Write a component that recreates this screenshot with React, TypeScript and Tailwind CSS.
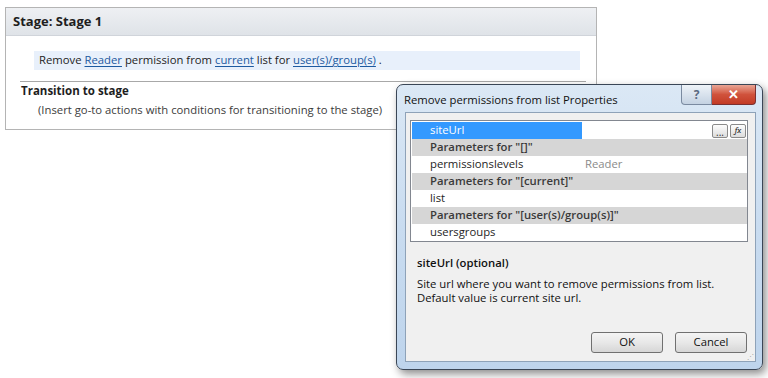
import React from "react";

const ui = "font-['Open_Sans','Noto_Sans',sans-serif]";

function Link({ children }: { children: React.ReactNode }) {
  return <span className="text-[#1d5aa0] underline underline-offset-2">{children}</span>;
}

function StagePanel() {
  return (
    <div className="ml-[5px] mt-[7px] w-[592px] h-[123px] border border-[#b4b4b4] bg-white">
      <div className="h-[28px] flex items-center pl-[7px] bg-gradient-to-b from-[#eef0f3] to-[#dfe3e8] border-b border-[#d0d4da]">
        <span className="text-[13px] font-bold text-[#1e1e1e]">Stage: Stage 1</span>
      </div>
      <div className="mt-[15px] ml-[28px] w-[546px] h-[19px] bg-[#e8f0fb] flex items-center pl-[5px] text-[11.3px] text-[#1e1e1e] whitespace-nowrap">
        Remove&nbsp;<Link>Reader</Link>&nbsp;permission from&nbsp;<Link>current</Link>&nbsp;list for&nbsp;
        <Link>user(s)/group(s)</Link>&nbsp;.
      </div>
      <div className="mt-[11px] ml-[14px] w-[566px] h-px bg-[#a8a8a8]" />
      <div className="ml-[15px] mt-[1px] text-[11.5px] font-bold text-[#1e1e1e] leading-[16px]">Transition to stage</div>
      <div className="ml-[32px] mt-[3px] text-[11.3px] text-[#3c3c3c] leading-[16px]">
        (Insert go-to actions with conditions for transitioning to the stage)
      </div>
    </div>
  );
}

function Row({ name, value, category, selected }: { name: string; value?: string; category?: boolean; selected?: boolean }) {
  if (category) {
    return (
      <div className="h-[17px] bg-[#d6d6d6] flex items-center pl-[18px] text-[11.3px] font-semibold text-[#3a3a3a]">
        {name}
      </div>
    );
  }
  return (
    <div className="h-[17px] flex items-center bg-white text-[11.3px]">
      <div className={`w-[170px] h-full flex items-center pl-[18px] ${selected ? "bg-[#3399ff] text-white" : "text-[#1e1e1e]"}`}>
        {name}
      </div>
      <div className="flex-1 h-full flex items-center pl-[3px] text-[#8a8a8a]">
        {value}
        {selected && (
          <div className="ml-auto mr-[1px] flex gap-[2px]">
            <div className="w-[16px] h-[14px] border border-[#8a8a8a] rounded-[2px] bg-gradient-to-b from-[#fdfdfd] to-[#dcdcdc] flex items-end justify-center text-[10px] leading-[10px] text-[#333]">
              ...
            </div>
            <div className="w-[16px] h-[14px] border border-[#8a8a8a] rounded-[2px] bg-gradient-to-b from-[#fdfdfd] to-[#dcdcdc] flex items-center justify-center text-[9px] italic font-serif text-[#222]">
              fx
            </div>
          </div>
        )}
      </div>
    </div>
  );
}

function Dialog() {
  return (
    <div className={`absolute left-[396px] top-[84px] w-[367px] h-[286px] rounded-[7px] border border-[#3a4656] bg-gradient-to-b from-[#dbe8f5] via-[#c9dcf0] to-[#bed4ec] shadow-[3px_4px_8px_rgba(0,0,0,0.45)] flex flex-col ${ui}`}>
      <div className="h-[27px] flex items-start">
        <span className="ml-[7px] mt-[7px] text-[11.3px] text-[#111]">Remove permissions from list Properties</span>
        <div className="ml-auto mr-[6px] flex">
          <div className="w-[31px] h-[20px] rounded-bl-[4px] border border-[#7a8aa0] border-t-0 bg-gradient-to-b from-[#eef3f8] to-[#c4d2e2] flex items-center justify-center text-[12px] font-bold text-[#5a6a80]">
            ?
          </div>
          <div className="w-[44px] h-[20px] rounded-br-[4px] border border-[#7a3030] border-t-0 border-l-0 bg-gradient-to-b from-[#e8a595] via-[#d0523c] to-[#c23a24] flex items-center justify-center text-[13px] font-bold text-white">
            ✕
          </div>
        </div>
      </div>
      <div className="ml-[8px] mr-[6px] h-[250px] bg-[#f0f0f0] border border-[#8ea2b8] flex flex-col relative">
        <div className="ml-[4px] mt-[7px] w-[338px] h-[122px] border border-[#828790] bg-white pt-px pl-px">
          <Row name="siteUrl" selected />
          <Row name='Parameters for "[]"' category />
          <Row name="permissionslevels" value="Reader" />
          <Row name='Parameters for "[current]"' category />
          <Row name="list" />
          <Row name='Parameters for "[user(s)/group(s)]"' category />
          <Row name="usersgroups" />
        </div>
        <div className="ml-[11px] mt-[13px] text-[11.3px] font-semibold text-[#111] leading-[16px]">siteUrl (optional)</div>
        <div className="ml-[11px] mt-[6px] text-[11.3px] text-[#111] leading-[14px]">
          Site url where you want to remove permissions from list.
        </div>
        <div className="ml-[11px] text-[11.3px] text-[#111] leading-[14px]">Default value is current site url.</div>
        <div className="mt-auto mb-[8px] mr-[8px] flex justify-end gap-[12px]">
          <button className="w-[72px] h-[21px] rounded-[3px] border border-[#707070] bg-gradient-to-b from-[#f4f4f4] via-[#e8e8e8] to-[#d6d6d6] text-[11.3px] text-[#111]">
            OK
          </button>
          <button className="w-[72px] h-[21px] rounded-[3px] border border-[#707070] bg-gradient-to-b from-[#f4f4f4] via-[#e8e8e8] to-[#d6d6d6] text-[11.3px] text-[#111]">
            Cancel
          </button>
        </div>
        <div className="absolute right-[1px] bottom-[1px] text-[7px] leading-[6px] text-[#a0a0a0]">⋰</div>
      </div>
    </div>
  );
}

export default function App() {
  return (
    <div className={`relative w-[768px] h-[378px] bg-white overflow-hidden ${ui}`}>
      <div className="flex">
        <StagePanel />
      </div>
      <Dialog />
    </div>
  );
}
